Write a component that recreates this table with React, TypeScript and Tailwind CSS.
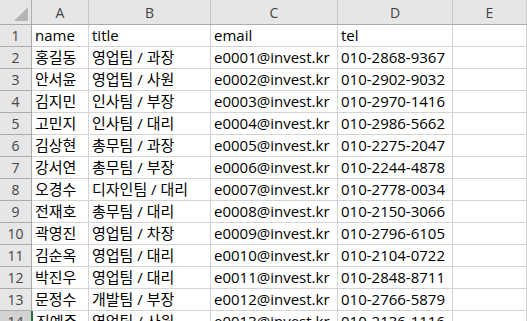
import { FC } from "react";

const rows: string[][] = [
  ["name", "title", "email", "tel"],
  ["홍길동", "영업팀 / 과장", "e0001@invest.kr", "010-2868-9367"],
  ["안서윤", "영업팀 / 사원", "e0002@invest.kr", "010-2902-9032"],
  ["김지민", "인사팀 / 부장", "e0003@invest.kr", "010-2970-1416"],
  ["고민지", "인사팀 / 대리", "e0004@invest.kr", "010-2986-5662"],
  ["김상현", "총무팀 / 과장", "e0005@invest.kr", "010-2275-2047"],
  ["강서연", "총무팀 / 부장", "e0006@invest.kr", "010-2244-4878"],
  ["오경수", "디자인팀 / 대리", "e0007@invest.kr", "010-2778-0034"],
  ["전재호", "총무팀 / 대리", "e0008@invest.kr", "010-2150-3066"],
  ["곽영진", "영업팀 / 차장", "e0009@invest.kr", "010-2796-6105"],
  ["김순옥", "영업팀 / 대리", "e0010@invest.kr", "010-2104-0722"],
  ["박진우", "영업팀 / 대리", "e0011@invest.kr", "010-2848-8711"],
  ["문정수", "개발팀 / 부장", "e0012@invest.kr", "010-2766-5879"],
  ["진예주", "영업팀 / 사원", "e0013@invest.kr", "010-2136-1116"],
];

const cols = ["A", "B", "C", "D", "E"];
const grid = "grid grid-cols-[32px_57px_122px_127px_115px_74px]";

const App: FC = () => {
  return (
    <div
      className="w-[527px] h-[321px] overflow-hidden bg-white text-[15px] text-black"
      style={{ fontFamily: '"Open Sans", "Noto Sans CJK KR", sans-serif' }}
    >
      <div className={`${grid} h-[25px] bg-[#e6e6e6] border-b border-[#ababab]`}>
        <div className="relative border-r border-[#ababab]">
          <svg className="absolute right-[3px] bottom-[3px]" width="14" height="14" viewBox="0 0 14 14">
            <polygon points="14,0 14,14 0,14" fill="#b5b5b5" />
          </svg>
        </div>
        {cols.map((c) => (
          <div
            key={c}
            className="flex items-center justify-center border-r border-[#c6c6c6] text-[14px] text-[#444]"
          >
            {c}
          </div>
        ))}
      </div>
      {rows.map((r, i) => {
        const sel = i === 13;
        return (
          <div key={i} className={`${grid} h-[22px]`}>
            <div
              className={`flex items-center justify-center border-b border-r text-[14px] text-[#444] ${
                sel ? "bg-[#d2d2d2] border-[#ababab]" : "bg-[#e6e6e6] border-[#ababab]"
              }`}
            >
              <span className={sel ? "" : ""}>{i + 1}</span>
            </div>
            {[...r, ""].map((v, j) => (
              <div
                key={j}
                className={`flex items-center overflow-hidden whitespace-nowrap border-b border-r border-[#d4d4d4] pl-[3px] leading-none ${
                  sel && j === 0 ? "border-l-2 border-l-[#217346] -ml-[1px]" : ""
                }`}
              >
                {v}
              </div>
            ))}
          </div>
        );
      })}
    </div>
  );
};

export default App;
